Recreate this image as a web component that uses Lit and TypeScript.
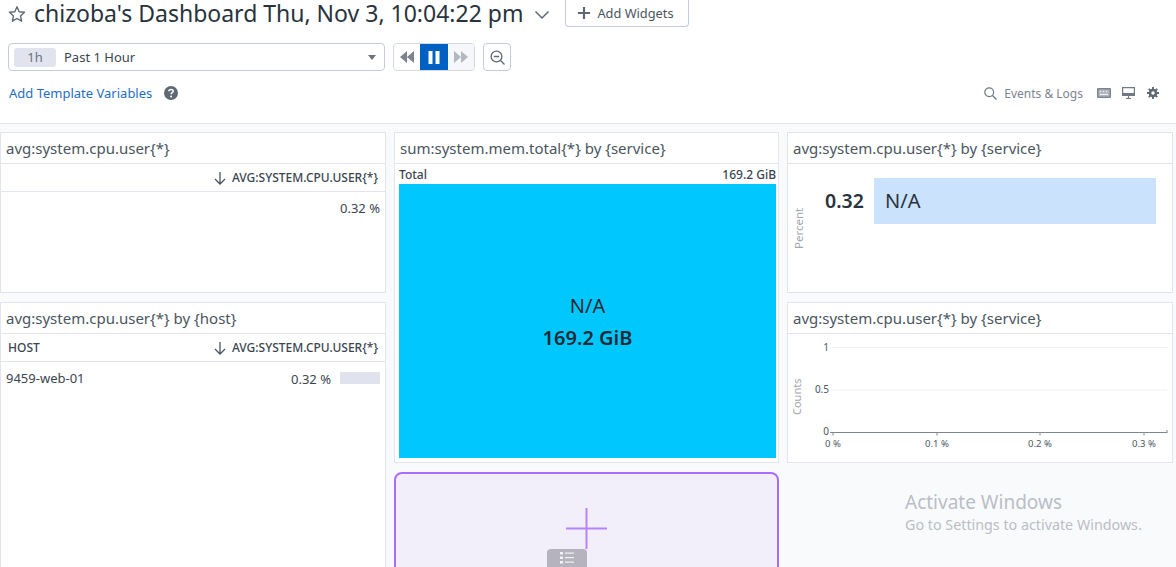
import { LitElement, html, css } from "lit";
import { customElement } from "lit/decorators.js";

const arrow = html`<svg class="sort" width="14" height="16" viewBox="0 0 14 16" fill="none" stroke="#4a5560" stroke-width="1.3"><path d="M7 2v12M2 9l5 5 5-5"/></svg>`;

@customElement("app-root")
export class AppRoot extends LitElement {
  static styles = css`
    :host { display: block; width: 1176px; height: 567px; overflow: hidden; position: relative; background: #f9fafc; font-family: "Noto Sans", "Open Sans", sans-serif; color: #28333d; }
    * { box-sizing: border-box; }
    header { height: 124px; background: #fff; border-bottom: 1px solid #e2e5ee; display: flex; flex-direction: column; }
    .title-row { height: 27px; display: flex; align-items: center; padding-left: 8px; }
    .star { margin-right: 8px; margin-top: 1px; }
    h1 { margin: 0; font-weight: 400; font-size: 23px; line-height: 27px; color: #28333d; white-space: nowrap; }
    .chev { margin: 2px 0 0 11px; }
    .add { margin: -1px 0 0 15px; height: 27px; width: 124px; border: 1px solid #c5cbdf; border-top: none; border-radius: 0 0 4px 4px; background: #fff; display: flex; align-items: center; padding-left: 12px; gap: 7px; font-size: 12.8px; color: #4a5560; }
    .time-row { display: flex; align-items: center; margin-top: 16px; padding-left: 8px; height: 28px; }
    .picker { width: 377px; height: 28px; border: 1px solid #c5cbdf; border-radius: 4px; display: flex; align-items: center; padding: 0 5px; background: #fff; }
    .badge { width: 42px; height: 19px; background: #e1e4ef; border-radius: 3px; font-size: 13px; color: #6b7280; display: flex; align-items: center; justify-content: center; }
    .picker span { margin-left: 8px; font-size: 13px; color: #3a4550; flex: 1; }
    .caret { width: 0; height: 0; border-left: 4.5px solid transparent; border-right: 4.5px solid transparent; border-top: 5px solid #6b7380; margin-right: 3px; }
    .controls { display: flex; margin-left: 8px; height: 28px; width: 82px; border: 1px solid #d5d9e6; border-radius: 4px; overflow: hidden; }
    .controls div { flex: 1; display: flex; align-items: center; justify-content: center; }
    .controls .on { background: #0061c2; flex: 0 0 28px; }
    .controls .off { background: #f6f7fa; }
    .zoomb { margin-left: 8px; width: 28px; height: 28px; border: 1px solid #c5cbdf; border-radius: 4px; display: flex; align-items: center; justify-content: center; }
    .var-row { display: flex; align-items: center; margin-top: 13px; padding: 0 17px 0 9px; height: 18px; }
    .link { font-size: 13px; color: #1f6fc4; }
    .help { margin-left: 12px; }
    .spacer { flex: 1; }
    .evt { display: flex; align-items: center; font-size: 12px; color: #7c8591; }
    .evt svg.s { margin-right: 7px; }
    .tool { margin-left: 12px; display: block; }
    .tool.first { margin-left: 14px; }
    .tool.mid { margin-left: 11px; }
    .board { display: grid; grid-template-columns: 386px 385px 386px; grid-template-rows: 161px 161px 161px; column-gap: 8px; row-gap: 9px; padding-top: 8px; }
    .w { background: #fff; border: 1px solid #e2e5ee; display: flex; flex-direction: column; min-width: 0; min-height: 0; position: relative; }
    .t { height: 31px; flex: none; border-bottom: 1px solid #e2e5ee; padding-left: 5px; font-size: 15px; line-height: 30px; color: #4a5560; white-space: nowrap; }
    .thead { height: 28px; flex: none; border-bottom: 1px solid #e2e5ee; display: flex; align-items: center; justify-content: space-between; padding: 0 7px; font-size: 12px; font-weight: 500; color: #3a4550; }
    .thead .r { display: flex; align-items: center; gap: 5px; margin-left: auto; }
    .row { display: flex; align-items: center; font-size: 13px; color: #3a4550; height: 20px; margin-top: 6px; padding: 0 5px; }
    .row .val { margin-left: auto; }
    .bar { width: 40px; height: 12px; background: #e0e3ee; margin-left: 9px; }
    .tm { flex: 1; display: flex; flex-direction: column; padding: 0 2px 4px 4px; min-height: 0; }
    .tm-head { height: 20px; flex: none; display: flex; justify-content: space-between; align-items: center; font-size: 12px; font-weight: 500; color: #3a4550; }
    .tm-box { flex: 1; background: #00c8ff; display: flex; flex-direction: column; align-items: center; justify-content: center; color: #1d2a35; padding-top: 2px; }
    .tm-box .a { font-size: 20px; line-height: 32px; }
    .tm-box .b { font-size: 20px; line-height: 32px; font-weight: 600; }
    .tv { flex: 1; display: flex; position: relative; }
    .tv .pct { position: absolute; left: 0; top: 43px; height: 42px; width: 22px; font-size: 11.5px; color: #a3a8b0; writing-mode: vertical-rl; transform: rotate(180deg); text-align: center; line-height: 22px; white-space: nowrap; }
    .tv .num { position: absolute; left: 37px; top: 25px; font-size: 19.5px; font-weight: 600; color: #28333d; line-height: 24px; }
    .tv .blk { position: absolute; left: 86px; top: 14px; width: 282px; height: 46px; background: #cbe2fd; font-size: 20px; line-height: 46px; padding-left: 11px; color: #28333d; }
    .chart { flex: 1; display: block; }
    .chart text { font-family: "Noto Sans", "Open Sans", sans-serif; }
    .add-w { background: #f2eefa; border: 2px solid #a96cfb; border-radius: 8px; position: relative; }
    .handle { position: absolute; left: 151px; top: 75px; width: 40px; height: 24px; background: #b5b3bd; border-radius: 4px 4px 0 0; display: flex; justify-content: center; padding-top: 2px; }
    .plus { position: absolute; left: 170px; top: 34px; display: block; }
    .wm { position: absolute; left: 905px; top: 490px; color: #b9bec6; pointer-events: none; }
    .wm .a { font-size: 19px; line-height: 25px; }
    .wm .b { font-size: 14.3px; line-height: 20px; }
  `;

  render() {
    return html`
      <header>
        <div class="title-row">
          <svg class="star" width="18" height="18" viewBox="0 0 18 18" fill="none" stroke="#5f6873" stroke-width="1.4" stroke-linejoin="round"><path d="M9 1.8l2.2 4.9 5.3.6-4 3.6 1.1 5.3L9 13.5l-4.6 2.7 1.1-5.3-4-3.6 5.3-.6z"/></svg>
          <h1>chizoba's Dashboard Thu, Nov 3, 10:04:22 pm</h1>
          <svg class="chev" width="16" height="10" viewBox="0 0 16 10" fill="none" stroke="#5f6873" stroke-width="1.5"><path d="M1.5 1.5L8 8l6.5-6.5"/></svg>
          <div class="add">
            <svg width="12" height="12" viewBox="0 0 12 12" stroke="#5f6873" stroke-width="2.2"><path d="M6 0v12M0 6h12"/></svg>
            Add Widgets
          </div>
        </div>
        <div class="time-row">
          <div class="picker"><div class="badge">1h</div><span>Past 1 Hour</span><div class="caret"></div></div>
          <div class="controls">
            <div><svg width="14" height="12" viewBox="0 0 14 12" fill="#7c848e"><path d="M7 0v12L0 6zM14 0v12L7 6z"/></svg></div>
            <div class="on"><svg width="12" height="13" viewBox="0 0 12 13" fill="#fff"><rect x="0.5" width="4" height="13"/><rect x="7.5" width="4" height="13"/></svg></div>
            <div class="off"><svg width="14" height="12" viewBox="0 0 14 12" fill="#b3b8c0"><path d="M0 0v12l7-6zM7 0v12l7-6z"/></svg></div>
          </div>
          <div class="zoomb"><svg width="15" height="15" viewBox="0 0 15 15" fill="none" stroke="#5f6873" stroke-width="1.3"><circle cx="6.5" cy="6.5" r="5.4"/><path d="M3.8 6.5h5.4M10.5 10.5l4 4"/></svg></div>
        </div>
        <div class="var-row">
          <span class="link">Add Template Variables</span>
          <svg class="help" width="14" height="14" viewBox="0 0 14 14"><circle cx="7" cy="7" r="7" fill="#5f6873"/><path d="M4.8 5.3C4.9 4 5.9 3.4 7 3.4c1.3 0 2.2.8 2.2 1.8 0 1.5-2.1 1.5-2.1 3" fill="none" stroke="#fff" stroke-width="1.5"/><circle cx="7.1" cy="10.4" r="1" fill="#fff"/></svg>
          <div class="spacer"></div>
          <div class="evt">
            <svg class="s" width="13" height="13" viewBox="0 0 13 13" fill="none" stroke="#6f7884" stroke-width="1.2"><circle cx="5.2" cy="5.2" r="4.4"/><path d="M8.5 8.5l4 4"/></svg>
            Events &amp; Logs
          </div>
          <svg class="tool first" width="14" height="10" viewBox="0 0 14 10"><rect width="14" height="10" rx="1" fill="#7c848e"/><rect x="1.5" y="1.5" width="11" height="7" fill="#b3b8c0"/><path d="M3 6.5h8M3 3.5h1M6 3.5h1M9 3.5h1" stroke="#f0f1f4" stroke-width="1"/></svg>
          <svg class="tool mid" width="13" height="12" viewBox="0 0 13 12"><path d="M0.6 0.6h11.8v7.8H0.6z" fill="none" stroke="#6f7884" stroke-width="1.2"/><rect x="1" y="6" width="11" height="2.5" fill="#6f7884"/><path d="M4 11.5h5M6.500 9v2.500" stroke="#6f7884" stroke-width="1.2"/></svg>
          <svg class="tool" width="12" height="12" viewBox="0 0 12 12"><circle cx="6" cy="6" r="3.2" fill="none" stroke="#5f6873" stroke-width="2.2"/><path d="M6 0v12M0 6h12M1.8 1.8l8.400 8.400M10.200 1.800l-8.400 8.400" stroke="#5f6873" stroke-width="1.9"/><circle cx="6" cy="6" r="1.7" fill="#fff"/></svg>
        </div>
      </header>
      <div class="board">
        <section class="w">
          <div class="t">avg:system.cpu.user{*}</div>
          <div class="thead"><div class="r">${arrow}<span>AVG:SYSTEM.CPU.USER{*}</span></div></div>
          <div class="row"><span class="val">0.32 %</span></div>
        </section>
        <section class="w" style="grid-row: span 2">
          <div class="t">sum:system.mem.total{*} by {service}</div>
          <div class="tm">
            <div class="tm-head"><span>Total</span><span>169.2 GiB</span></div>
            <div class="tm-box"><div class="a">N/A</div><div class="b">169.2 GiB</div></div>
          </div>
        </section>
        <section class="w">
          <div class="t">avg:system.cpu.user{*} by {service}</div>
          <div class="tv">
            <div class="pct">Percent</div>
            <div class="num">0.32</div>
            <div class="blk">N/A</div>
          </div>
        </section>
        <section class="w" style="grid-row: 2 / span 2; grid-column: 1">
          <div class="t">avg:system.cpu.user{*} by {host}</div>
          <div class="thead"><span>HOST</span><div class="r">${arrow}<span>AVG:SYSTEM.CPU.USER{*}</span></div></div>
          <div class="row">9459-web-01<span class="val" style="margin-top:2px">0.32 %</span><div class="bar"></div></div>
        </section>
        <section class="w" style="grid-column: 3; grid-row: 2">
          <div class="t">avg:system.cpu.user{*} by {service}</div>
          <svg class="chart" viewBox="0 0 384 128" width="384" height="128">
            <g stroke="#f0f1f3" stroke-width="1"><path d="M45 13.500h334M45 56h334"/></g>
            <path d="M45 98.500h334M45 98.500v3M149 98.500v3M252 98.500v3M356 98.500v3M45 98.500h-3M379 96v3" stroke="#80868e" fill="none"/>
            <g font-size="10" fill="#4a5560" text-anchor="end"><text x="41" y="17">1</text><text x="41" y="59">0.5</text><text x="41" y="101">0</text></g>
            <g font-size="9.500" fill="#4a5560" text-anchor="middle"><text x="45" y="113">0 %</text><text x="149" y="113">0.1 %</text><text x="252" y="113">0.2 %</text><text x="356" y="113">0.3 %</text></g>
            <text transform="translate(13 81) rotate(-90)" font-size="11" fill="#a3a8b0">Counts</text>
          </svg>
        </section>
        <section class="add-w" style="grid-column: 2; grid-row: 3">
          <svg class="plus" width="41" height="41" viewBox="0 0 41 41" stroke="#b583fb" stroke-width="2"><path d="M20.500 0v41M0 20.500h41"/></svg>
          <div class="handle"><svg width="14" height="13" viewBox="0 0 14 13" fill="#f2f2f5"><rect y="1" width="3" height="2.500"/><rect y="5.500" width="3" height="2.500"/><rect y="10" width="3" height="2.500"/><rect x="5" y="1.500" width="9" height="1.200"/><rect x="5" y="6" width="9" height="1.200"/><rect x="5" y="10.500" width="9" height="1.200"/></svg></div>
        </section>
      </div>
      <div class="wm"><div class="a">Activate Windows</div><div class="b">Go to Settings to activate Windows.</div></div>
    `;
  }
}
